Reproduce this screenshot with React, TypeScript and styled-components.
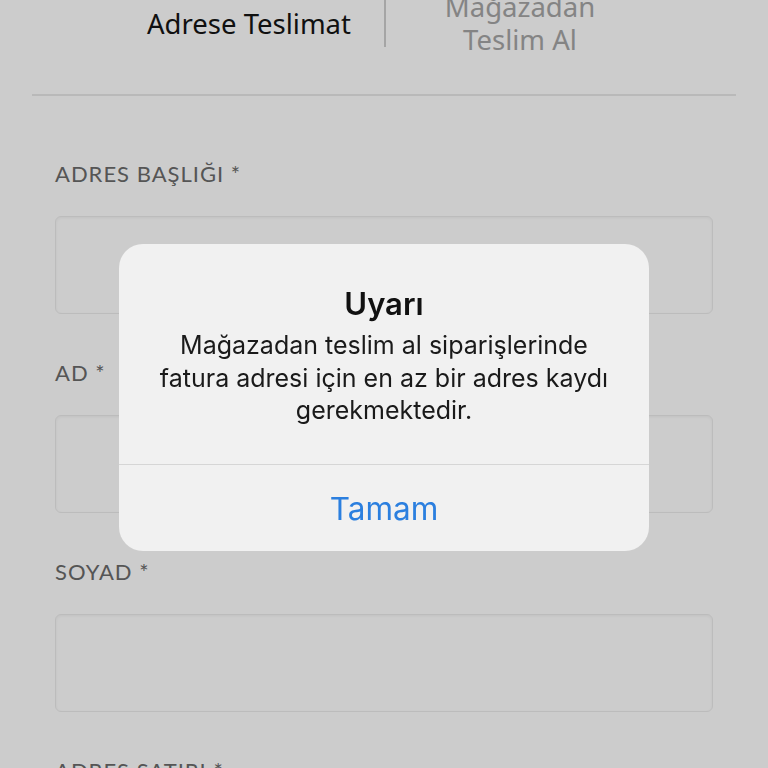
import styled, { createGlobalStyle } from "styled-components";

const GlobalStyle = createGlobalStyle`
  html, body {
    margin: 0;
    padding: 0;
    background: #ffffff;
    overflow: hidden;
  }
  * {
    box-sizing: border-box;
  }
`;

const fields = ["ADRES BAŞLIĞI *", "AD *", "SOYAD *", "ADRES SATIRI *"];

const App = () => {
  return (
    <>
      <GlobalStyle />
      <Page>
        <TabBar>
          <Tab active>Adrese Teslimat</Tab>
          <TabDivider />
          <Tab wide>Mağazadan Teslim Al</Tab>
        </TabBar>
        <Rule />

        <Form>
          {fields.map((label) => (
            <Field key={label}>
              <Label>{label}</Label>
              <Input />
            </Field>
          ))}
        </Form>
      </Page>

      {/* Alert dialog over the dimmed page */}
      <Overlay>
        <Alert>
          <AlertBody>
            <AlertTitle>Uyarı</AlertTitle>
            <AlertMessage>
              Mağazadan teslim al siparişlerinde
              <br />
              fatura adresi için en az bir adres kaydı
              <br />
              gerekmektedir.
            </AlertMessage>
          </AlertBody>
          <AlertButton>Tamam</AlertButton>
        </Alert>
      </Overlay>
    </>
  );
};

const Page = styled.div`
  width: 768px;
  height: 768px;
  overflow: hidden;
  background: #ffffff;
  font-family: Lato, "Noto Sans", sans-serif;
`;

const TabBar = styled.div`
  display: flex;
  justify-content: center;
  align-items: center;
  height: 86px;
  margin-top: -20px;
`;

const Tab = styled.div<{ active?: boolean; wide?: boolean }>`
  padding: 0 33px;
  width: ${(p) => (p.wide ? "268px" : "auto")};
  text-align: center;
  font-family: "Noto Sans", Lato, sans-serif;
  font-size: 27.5px;
  line-height: 33px;
  color: ${(p) => (p.active ? "#141414" : "#a6a6a6")};
`;

const TabDivider = styled.div`
  width: 2px;
  align-self: flex-start;
  margin-top: 14px;
  height: 53px;
  background: #cfcfcf;
`;

const Rule = styled.div`
  height: 2px;
  margin: 28px 32px 0;
  background: #e8e8e8;
`;

const Form = styled.div`
  display: flex;
  flex-direction: column;
  gap: 44px;
  padding: 63px 55px 0;
`;

const Field = styled.div`
  display: flex;
  flex-direction: column;
  gap: 28px;
`;

const Label = styled.div`
  font-size: 22px;
  line-height: 29px;
  color: #6b6b6b;
  letter-spacing: 1px;
`;

const Input = styled.div`
  height: 98px;
  border: 1px solid #ececec;
  border-radius: 6px;
  box-shadow: inset 0 1px 3px rgba(0, 0, 0, 0.05);
`;

const Overlay = styled.div`
  position: fixed;
  inset: 0;
  background: rgba(0, 0, 0, 0.2);
  display: flex;
  justify-content: center;
  padding-top: 244px;
`;

const Alert = styled.div`
  width: 530px;
  height: 307px;
  background: #f1f1f1;
  border-radius: 24px;
  display: flex;
  flex-direction: column;
  overflow: hidden;
  font-family: Inter, "Noto Sans", sans-serif;
  text-align: center;
`;

const AlertBody = styled.div`
  height: 221px;
  padding-top: 41px;
  border-bottom: 1px solid #d6d6d6;
`;

const AlertTitle = styled.div`
  font-size: 31px;
  font-weight: 600;
  line-height: 38px;
  color: #111;
`;

const AlertMessage = styled.div`
  margin-top: 6px;
  font-size: 25px;
  line-height: 32.5px;
  color: #1a1a1a;
`;

const AlertButton = styled.div`
  flex: 1;
  display: flex;
  align-items: center;
  justify-content: center;
  font-size: 31.5px;
  color: #2b7fdf;
`;

export default App;
